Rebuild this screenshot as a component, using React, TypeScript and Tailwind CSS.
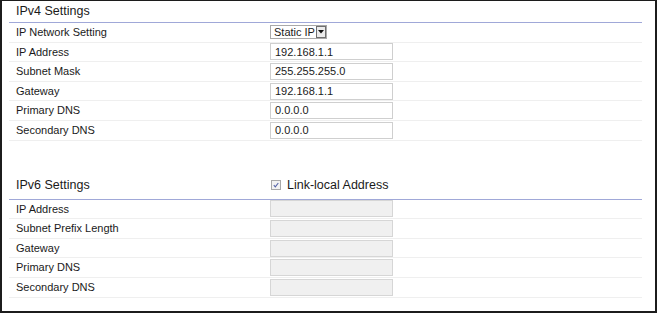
import type { ReactNode } from "react";

const ipv4Rows = [
	{ label: "IP Address", value: "192.168.1.1" },
	{ label: "Subnet Mask", value: "255.255.255.0" },
	{ label: "Gateway", value: "192.168.1.1" },
	{ label: "Primary DNS", value: "0.0.0.0" },
	{ label: "Secondary DNS", value: "0.0.0.0" },
];

const ipv6Rows = [
	"IP Address",
	"Subnet Prefix Length",
	"Gateway",
	"Primary DNS",
	"Secondary DNS",
];

function Row({ label, children }: { label: string; children?: ReactNode }) {
	return (
		<div className="flex h-[19.6px] items-center border-b border-[#efefef]">
			<div className="w-[261px] pl-[7px] text-[11px] text-[#1a1a1a]">{label}</div>
			{children}
		</div>
	);
}

function TextField({ value, disabled }: { value?: string; disabled?: boolean }) {
	return (
		<div
			className={
				disabled
					? "h-[17px] w-[123px] border border-[#d6d6d6] bg-[#f0f0f0]"
					: "flex h-[17px] w-[123px] items-center border border-[#cfcfcf] bg-white pl-[4px] text-[11px] text-[#1a1a1a]"
			}
		>
			{value}
		</div>
	);
}

function SelectBox() {
	return (
		<div className="flex h-[14px] items-center whitespace-nowrap border border-[#a9a9a9] bg-white pl-[3px] text-[11px] leading-none text-[#1a1a1a]">
			<span>Static IP</span>
			<span className="ml-[1px] flex h-[12px] w-[10px] items-center justify-center border border-[#6f6f6f] bg-[#ececec]">
				<svg width="6" height="4" viewBox="0 0 6 4">
					<path d="M0 0h6L3 3.5z" fill="#111" />
				</svg>
			</span>
		</div>
	);
}

function Checkbox() {
	return (
		<svg width="10" height="10" viewBox="0 0 10 10">
			<rect x="0.5" y="0.5" width="9" height="9" fill="#f2f2f2" stroke="#a8a8a8" />
			<path d="M2.8 5.2l1.5 1.6 3-3.8" fill="none" stroke="#5563a8" strokeWidth="1.1" />
		</svg>
	);
}

export default function App() {
	return (
		<div className="h-[313px] w-[657px] bg-white font-['Liberation_Sans',Arial,sans-serif]">
			<div className="h-[313px] w-[657px] border border-l-2 border-b-2 border-r-2 border-[#1c1c1c] pl-[7px] pr-[13px]">
				{/* IPv4 */}
				<div className="flex h-[22px] items-center border-b border-[#a0a8d8] pl-[7px] text-[12.5px] text-[#1a1a1a]">
					IPv4 Settings
				</div>
				<Row label="IP Network Setting">
					<SelectBox />
				</Row>
				{ipv4Rows.map((row) => (
					<Row key={row.label} label={row.label}>
						<TextField value={row.value} />
					</Row>
				))}

				{/* IPv6 */}
				<div className="mt-[31px] flex h-[28px] items-center border-b border-[#a0a8d8] text-[12.5px] text-[#1a1a1a]">
					<div className="w-[262px] pl-[7px]">IPv6 Settings</div>
					<Checkbox />
					<span className="ml-[6px]">Link-local Address</span>
				</div>
				{ipv6Rows.map((label) => (
					<Row key={label} label={label}>
						<TextField disabled />
					</Row>
				))}
			</div>
		</div>
	);
}
